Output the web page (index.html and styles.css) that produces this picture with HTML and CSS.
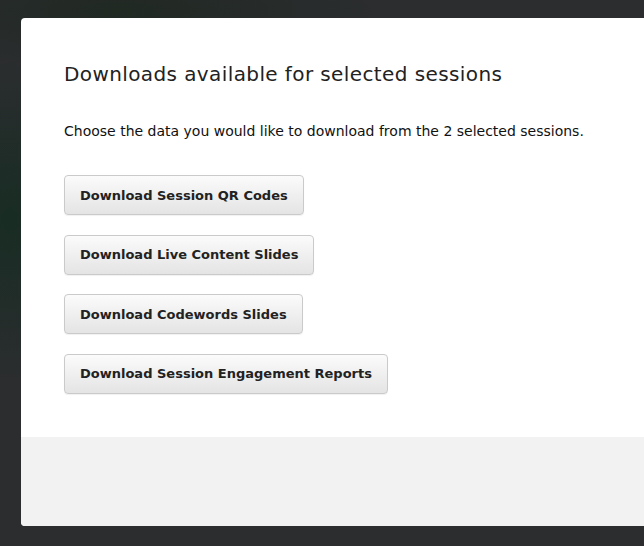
FILE: index.html
```html
<!DOCTYPE html>
<html>
<head>
<meta charset="utf-8">
<link rel="stylesheet" href="styles.css">
</head>
<body>
<div class="backdrop">
  <div class="modal">
    <div class="modal-body">
      <h1 class="title">Downloads available for selected sessions</h1>
      <p class="lead">Choose the data you would like to download from the 2 selected sessions.</p>
      <div class="actions">
        <button class="btn">Download Session QR Codes</button>
        <button class="btn">Download Live Content Slides</button>
        <button class="btn">Download Codewords Slides</button>
        <button class="btn">Download Session Engagement Reports</button>
      </div>
    </div>
    <div class="modal-footer"></div>
  </div>
</div>
</body>
</html>
```
FILE: styles.css
```css
html, body {
  margin: 0;
  padding: 0;
  height: 100%;
}
body {
  background: #2b2d2f;
  font-family: "DejaVu Sans", "Liberation Sans", sans-serif;
  color: #222;
  overflow: hidden;
}
.backdrop {
  height: 546px;
  padding: 18px 0 0 21px;
  box-sizing: border-box;
  background:
    radial-gradient(ellipse 120px 160px at 10px 220px, rgba(22,44,34,0.9), rgba(22,44,34,0) 100%),
    radial-gradient(ellipse 260px 60px at 120px 10px, rgba(30,40,32,0.8), rgba(30,40,32,0) 100%),
    #2b2d2f;
}
.modal {
  width: 640px;
  height: 508px;
  background: #fff;
  border-radius: 4px 0 0 4px;
  display: flex;
  flex-direction: column;
  overflow: hidden;
}
.modal-body {
  padding: 44px 43px 0;
  height: 419px;
  box-sizing: border-box;
}
.modal-footer {
  flex: 1;
  background: #f2f2f2;
}
.title {
  margin: 0;
  font-size: 20px;
  letter-spacing: 0.4px;
  font-weight: normal;
  color: #222;
  line-height: 24px;
}
.lead {
  margin: 35px 0 0;
  font-size: 14px;
  line-height: 20px;
  color: #111;
}
.actions {
  margin-top: 34px;
  display: flex;
  flex-direction: column;
  align-items: flex-start;
  gap: 19.5px;
}
.btn {
  font-family: inherit;
  font-weight: bold;
  font-size: 13px;
  color: #222;
  height: 40px;
  padding: 0 15px;
  border: 1px solid #cacaca;
  border-radius: 4px;
  background: linear-gradient(#fbfbfb, #e4e4e4);
  box-shadow: 0 1px 1px rgba(0,0,0,0.06);
}
```
